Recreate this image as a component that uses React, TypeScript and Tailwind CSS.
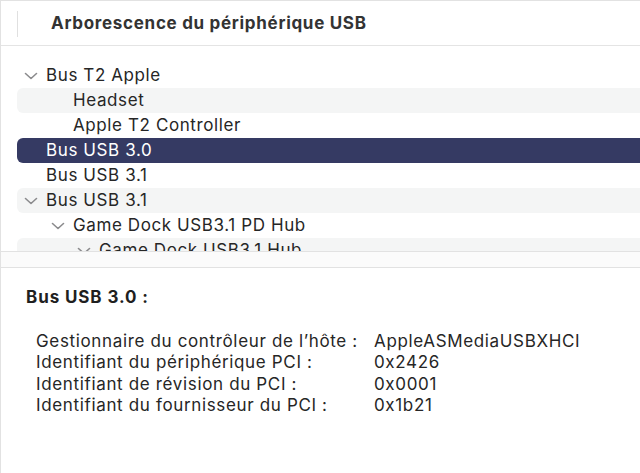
import React from "react";

const font = { fontFamily: "Inter, 'Noto Sans', 'Liberation Sans', sans-serif" };

function Chevron() {
  return (
    <svg width="14" height="8" viewBox="0 0 14 8" className="shrink-0">
      <path d="M1.5 1.5 L7 6.5 L12.5 1.5" fill="none" stroke="#8b8b8d" strokeWidth="1.6" strokeLinecap="round" strokeLinejoin="round" />
    </svg>
  );
}

type Row = { label: string; level: number; chevron: boolean; bg: "none" | "alt" | "sel" };

const rows: Row[] = [
  { label: "Bus T2 Apple", level: 0, chevron: true, bg: "none" },
  { label: "Headset", level: 1, chevron: false, bg: "alt" },
  { label: "Apple T2 Controller", level: 1, chevron: false, bg: "none" },
  { label: "Bus USB 3.0", level: 0, chevron: false, bg: "sel" },
  { label: "Bus USB 3.1", level: 0, chevron: false, bg: "none" },
  { label: "Bus USB 3.1", level: 0, chevron: true, bg: "alt" },
  { label: "Game Dock USB3.1 PD Hub", level: 1, chevron: true, bg: "none" },
  { label: "Game Dock USB3.1 Hub", level: 2, chevron: true, bg: "alt" },
];

const indentClass = ["pl-[29px]", "pl-[56px]", "pl-[82px]"];

export default function App() {
  return (
    <div className="w-[640px] h-[473px] bg-white border-l border-t border-[#e2e2e2] overflow-hidden flex flex-col text-[#262626] tracking-[0.6px]" style={font}>
      <div className="h-[45px] shrink-0 flex items-center pt-[2px] border-b border-[#e4e4e4]">
        <div className="ml-[16px] w-px h-[26px] bg-[#e0e0e0]" />
        <div className="ml-[33px] text-[17px] font-bold text-[#333333] tracking-[0.7px]">Arborescence du périphérique USB</div>
      </div>
      <div className="h-[205px] shrink-0 overflow-hidden pt-[17px]">
        {rows.map((r, i) => {
          const bg =
            r.bg === "sel"
              ? "bg-[#353a63] text-white"
              : r.bg === "alt"
              ? "bg-[#f4f5f5]"
              : "";
          return (
            <div key={i} className={`ml-[16px] h-[25px] rounded-l-[6px] flex items-center ${bg} ${indentClass[r.level]}`}>
              <div className="w-[22px] -ml-[22px] flex items-center justify-start">{r.chevron ? <Chevron /> : null}</div>
              <span className="text-[17px] leading-none whitespace-nowrap">{r.label}</span>
            </div>
          );
        })}
      </div>
      <div className="h-[17px] shrink-0 border-t border-b border-[#e2e2e2] bg-[#fbfbfb]" />
      <div className="flex-1 pl-[25px] pt-[17px]">
        <div className="text-[17px] font-bold text-[#1f1f1f] tracking-[0.9px]">Bus USB 3.0 :</div>
        <div className="mt-[20px] pl-[10px] grid grid-cols-[338px_1fr] text-[17px] leading-[21.5px] text-[#262626] tracking-[0.65px]">
          <div>Gestionnaire du contrôleur de l’hôte :</div>
          <div>AppleASMediaUSBXHCI</div>
          <div>Identifiant du périphérique PCI :</div>
          <div>0x2426</div>
          <div>Identifiant de révision du PCI :</div>
          <div>0x0001</div>
          <div>Identifiant du fournisseur du PCI :</div>
          <div>0x1b21</div>
        </div>
      </div>
    </div>
  );
}
